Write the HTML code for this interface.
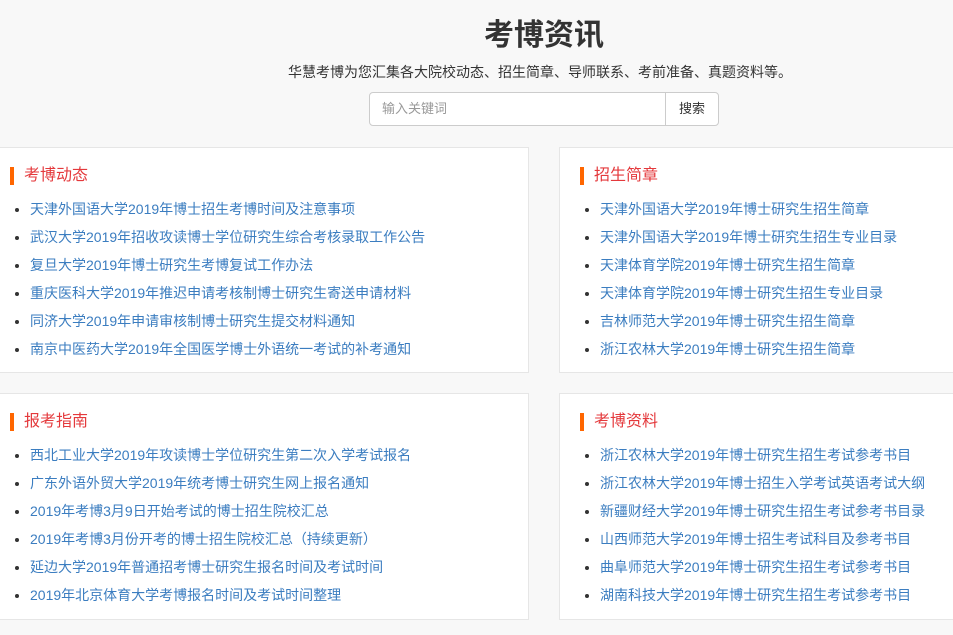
<!DOCTYPE html>
<html><head><meta charset="utf-8"><style>
*{margin:0;padding:0;box-sizing:border-box}
body{width:953px;height:635px;overflow:hidden;background:#f8f8f8;font-family:"Liberation Sans","Noto Sans CJK SC",sans-serif;position:relative}
h1{position:absolute;left:0;width:1088px;top:16px;text-align:center;font-size:30px;font-weight:bold;color:#333;line-height:40px}
.sub{position:absolute;left:0;width:1080px;top:63px;text-align:center;font-size:14px;color:#333;line-height:18px}
.inp{position:absolute;left:369px;top:92px;width:297px;height:34px;border:1px solid #ccc;border-radius:4px 0 0 4px;background:#fff;font-size:13px;color:#999;padding:8px 12px;line-height:16px}
.btn{position:absolute;left:665px;top:92px;width:54px;height:34px;border:1px solid #ccc;border-radius:0 4px 4px 0;background:#fff;font-size:13px;color:#333;text-align:center;line-height:32px}
.p{position:absolute;background:#fff;border:1px solid #e6e6e6}
.p h3{position:absolute;left:10px;top:19px;font-size:16px;font-weight:normal;color:#e4393c;line-height:18px;padding-left:10px;border-left:4px solid #ff6600;height:18px}
.p ul{position:absolute;left:30px;top:47px;list-style:disc;font-size:14px;line-height:28px;color:#333}
.p.r h3{left:20px}
.p.r ul{left:40px}
.p li{white-space:nowrap}
.p li span{color:#3b7dc0}
</style></head><body>
<h1>考博资讯</h1>
<div class="sub">华慧考博为您汇集各大院校动态、招生简章、导师联系、考前准备、真题资料等。</div>
<div class="inp">输入关键词</div><div class="btn">搜索</div>
<div class="p" style="left:-1px;top:147px;width:530px;height:226px"><h3>考博动态</h3><ul>
<li><span>天津外国语大学2019年博士招生考博时间及注意事项</span></li>
<li><span>武汉大学2019年招收攻读博士学位研究生综合考核录取工作公告</span></li>
<li><span>复旦大学2019年博士研究生考博复试工作办法</span></li>
<li><span>重庆医科大学2019年推迟申请考核制博士研究生寄送申请材料</span></li>
<li><span>同济大学2019年申请审核制博士研究生提交材料通知</span></li>
<li><span>南京中医药大学2019年全国医学博士外语统一考试的补考通知</span></li></ul></div>
<div class="p r" style="left:559px;top:147px;width:400px;height:226px"><h3>招生简章</h3><ul>
<li><span>天津外国语大学2019年博士研究生招生简章</span></li>
<li><span>天津外国语大学2019年博士研究生招生专业目录</span></li>
<li><span>天津体育学院2019年博士研究生招生简章</span></li>
<li><span>天津体育学院2019年博士研究生招生专业目录</span></li>
<li><span>吉林师范大学2019年博士研究生招生简章</span></li>
<li><span>浙江农林大学2019年博士研究生招生简章</span></li></ul></div>
<div class="p" style="left:-1px;top:393px;width:530px;height:227px"><h3>报考指南</h3><ul>
<li><span>西北工业大学2019年攻读博士学位研究生第二次入学考试报名</span></li>
<li><span>广东外语外贸大学2019年统考博士研究生网上报名通知</span></li>
<li><span>2019年考博3月9日开始考试的博士招生院校汇总</span></li>
<li><span>2019年考博3月份开考的博士招生院校汇总（持续更新）</span></li>
<li><span>延边大学2019年普通招考博士研究生报名时间及考试时间</span></li>
<li><span>2019年北京体育大学考博报名时间及考试时间整理</span></li></ul></div>
<div class="p r" style="left:559px;top:393px;width:400px;height:227px"><h3>考博资料</h3><ul>
<li><span>浙江农林大学2019年博士研究生招生考试参考书目</span></li>
<li><span>浙江农林大学2019年博士招生入学考试英语考试大纲</span></li>
<li><span>新疆财经大学2019年博士研究生招生考试参考书目录</span></li>
<li><span>山西师范大学2019年博士招生考试科目及参考书目</span></li>
<li><span>曲阜师范大学2019年博士研究生招生考试参考书目</span></li>
<li><span>湖南科技大学2019年博士研究生招生考试参考书目</span></li></ul></div>
</body></html>
